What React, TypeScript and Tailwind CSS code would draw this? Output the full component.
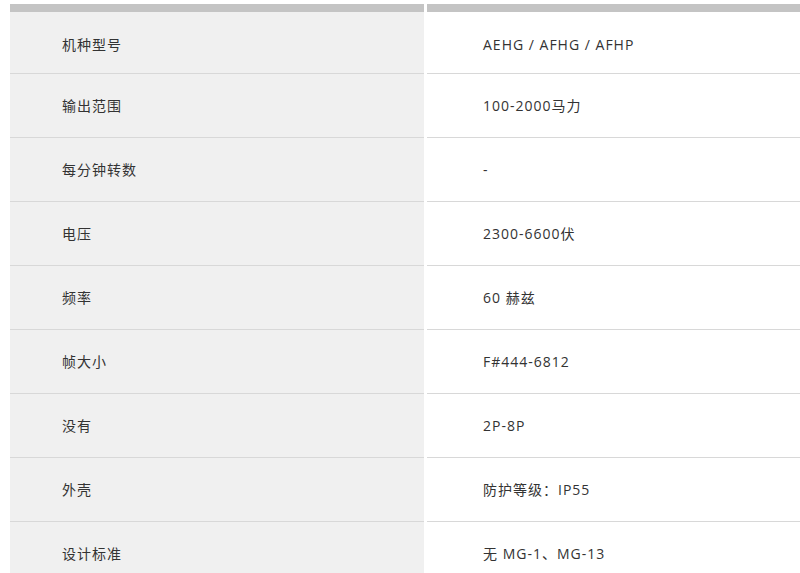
const rows: [string, string][] = [
  ["机种型号", "AEHG / AFHG / AFHP"],
  ["输出范围", "100-2000马力"],
  ["每分钟转数", "-"],
  ["电压", "2300-6600伏"],
  ["频率", "60 赫兹"],
  ["帧大小", "F#444-6812"],
  ["没有", "2P-8P"],
  ["外壳", "防护等级：IP55"],
  ["设计标准", "无 MG-1、MG-13"],
]

export default function App() {
  return (
    <div
      className="h-[573px] w-[800px] overflow-hidden bg-white pl-[10px] pt-1 text-[14px] tracking-[1px] text-[#333]"
      style={{ fontFamily: '"Open Sans", "Noto Sans CJK SC", sans-serif' }}
    >
      <div className="grid grid-cols-[414px_1fr] gap-x-[3px]">
        {/* header bar */}
        <div className="h-2 bg-[#c4c4c4]" />
        <div className="h-2 bg-[#c4c4c4]" />

        {rows.map(([label, value], i) => (
          <div key={label} className="contents">
            <div
              className={`flex items-center border-b border-[#d8d8d8] bg-[#f0f0f0] pl-[52px] ${
                i === 0 ? "h-[62px] pt-1" : "h-16"
              }`}
            >
              {label}
            </div>
            <div
              className={`flex items-center border-b border-[#d8d8d8] bg-white pl-[56px] ${
                i === 0 ? "h-[62px] pt-1" : "h-16"
              }`}
            >
              {value}
            </div>
          </div>
        ))}
      </div>
    </div>
  )
}
